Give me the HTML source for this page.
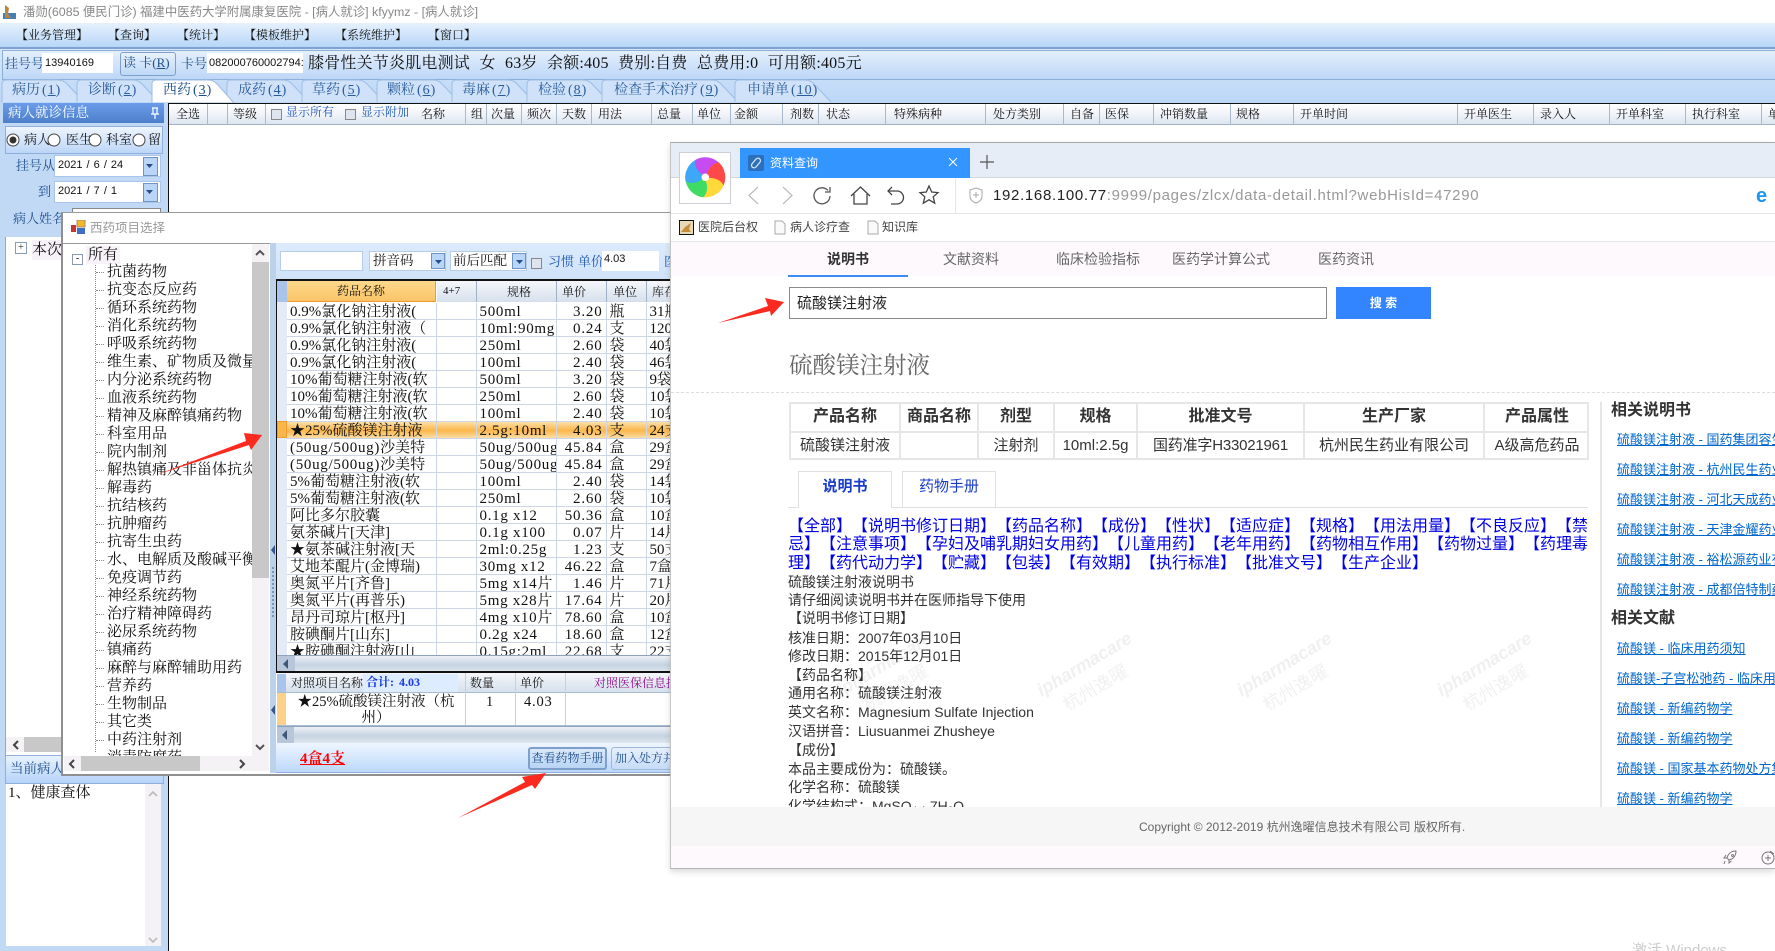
<!DOCTYPE html>
<html lang="zh"><head><meta charset="utf-8"><title>病人就诊</title>
<style>
html,body{margin:0;padding:0;width:1775px;height:951px;overflow:hidden;background:#fff}
body{position:relative;font-family:"Liberation Serif","Noto Serif CJK SC",serif;font-size:12px;color:#111;text-spacing-trim:space-all}
.a{position:absolute;white-space:nowrap}
.b{position:absolute}
.s{font-family:"Liberation Sans","Noto Sans CJK SC",sans-serif}
.hd{position:absolute;top:104px;height:20px;line-height:20px;font-size:12px;white-space:nowrap;color:#111}
.sp{position:absolute;top:104px;height:21px;width:1px;background:#a9b9cc}
.tree div{position:absolute;left:107px;white-space:nowrap;font-size:15px;line-height:18px;height:18px}
.tree div::before{content:"";position:absolute;left:-11px;top:9px;width:8px;border-top:1px dotted #888}
table{border-collapse:collapse;table-layout:fixed}
#g td{height:14px;line-height:14px;padding:2px 0 0 3px;border-right:1px solid #cdd6e4;border-bottom:1px solid #cdd6e4;font-size:15px;white-space:nowrap;overflow:hidden;color:#111}
#g td.r{text-align:right;padding:2px 3px 0 0;letter-spacing:.8px}
#g td.m{letter-spacing:.7px}
#g span{letter-spacing:.7px}
.ts{position:absolute;top:80px;height:22px;line-height:22px;font-size:14px;color:#2a5c9c;white-space:nowrap}
.ts i{font-style:normal;letter-spacing:1px;margin-left:2px}
.th{position:absolute;top:402px;height:29px;line-height:29px;text-align:center;font-size:16px;font-weight:bold;color:#333}
.td{position:absolute;top:431px;height:29px;line-height:29px;text-align:center;font-size:15px;color:#333}
.vl{position:absolute;top:402px;height:58px;width:2px;background:#e6e6e6}
.lk{position:absolute;left:1617px;font-size:13px;line-height:16px;color:#0066cc;text-decoration:underline;white-space:nowrap;font-family:"Liberation Sans","Noto Sans CJK SC",sans-serif}
.tx{position:absolute;left:788px;font-size:14px;line-height:18px;color:#333;white-space:nowrap;font-family:"Liberation Sans","Noto Sans CJK SC",sans-serif}
.sb{position:absolute;background:linear-gradient(#eef1f7,#c6d3e2 55%,#dfe6ef);border-top:1px solid #8fa3bd}
.w1{position:absolute;font-family:"Liberation Sans","Noto Sans CJK SC",sans-serif;white-space:nowrap;font-size:18px;font-style:italic;font-weight:bold;color:#f0f0f0;transform:rotate(-31deg);top:654px}
.w2{position:absolute;font-family:"Liberation Sans","Noto Sans CJK SC",sans-serif;white-space:nowrap;font-size:18px;color:#f1f1f1;transform:rotate(-31deg);top:674px}
</style></head><body>

<!-- title bar -->
<svg class="b" style="left:2px;top:4px" width="16" height="16"><rect x="1" y="9" width="13" height="6" fill="#4a7fb5"/><path d="M3 1l4 3-1 6 3 4H3z" fill="#b9853c"/></svg>
<div class="a s" style="left:23px;top:3px;font-size:12.4px;line-height:18px;color:#888">潘勋(6085 便民门诊) 福建中医药大学附属康复医院 - [病人就诊] kfyymz - [病人就诊]</div>

<!-- menu -->
<div class="b" style="left:0;top:23px;width:1775px;height:24px;background:linear-gradient(#e6f1fd,#b7d6f8)"></div>
<div class="b" style="left:0;top:47px;width:1775px;height:2px;background:#7ea3cf"></div>
<div class="a" style="left:16px;top:27px;line-height:16px;font-size:12px">【业务管理】</div>
<div class="a" style="left:108px;top:27px;line-height:16px;font-size:12px">【查询】</div>
<div class="a" style="left:177px;top:27px;line-height:16px;font-size:12px">【统计】</div>
<div class="a" style="left:244px;top:27px;line-height:16px;font-size:12px">【模板维护】</div>
<div class="a" style="left:335px;top:27px;line-height:16px;font-size:12px">【系统维护】</div>
<div class="a" style="left:428px;top:27px;line-height:16px;font-size:12px">【窗口】</div>

<!-- toolbar -->
<div class="b" style="left:0;top:49px;width:1775px;height:54px;background:linear-gradient(#d5e6fa,#bcd7f7)"></div>
<div class="b" style="left:2px;top:50px;width:1773px;height:28px;border:1px solid #8eb0d8;border-right:0;background:linear-gradient(#e3effc,#bdd7f7)"></div>
<div class="a" style="left:5px;top:55px;line-height:18px;font-size:13px;color:#1d4d8c">挂号号</div>
<div class="b" style="left:42px;top:53px;width:71px;height:20px;background:#fff"></div>
<div class="a s" style="left:45px;top:55px;line-height:16px;font-size:11px;color:#111">13940169</div>
<div class="b" style="left:120px;top:52px;width:54px;height:22px;border:1px solid #7e9fca;border-radius:3px;background:linear-gradient(#e8f2fd,#bdd8f7)"></div>
<div class="a" style="left:123px;top:54px;line-height:18px;font-size:13px;color:#1d4d8c">读 卡(<u>R</u>)</div>
<div class="a" style="left:181px;top:55px;line-height:18px;font-size:13px;color:#1d4d8c">卡号</div>
<div class="b" style="left:207px;top:53px;width:96px;height:20px;background:#fff;overflow:hidden"><div class="a s" style="left:2px;top:2px;line-height:16px;font-size:11px;color:#111">082000760002794:</div></div>
<div class="a" style="left:308px;top:52px;line-height:24px;font-size:16px;color:#111;word-spacing:5.2px;letter-spacing:.2px">膝骨性关节炎肌电测试 女 63岁 余额:405 费别:自费 总费用:0 可用额:405元</div>

<!-- tabs -->
<svg class="b" style="left:0;top:78px" width="840" height="26">
<g fill="#cfe2f9" stroke="#9cbde4">
<path d="M2 24V6Q2 2 6 2H58Q64 2 68 7L84 24"/>
<path d="M77 24V6Q77 2 81 2H133Q139 2 143 7L159 24"/>
<path d="M227 24V6Q227 2 231 2H283Q289 2 293 7L309 24"/>
<path d="M302 24V6Q302 2 306 2H358Q364 2 368 7L384 24"/>
<path d="M377 24V6Q377 2 381 2H433Q439 2 443 7L459 24"/>
<path d="M452 24V6Q452 2 456 2H508Q514 2 518 7L534 24"/>
<path d="M527 24V6Q527 2 531 2H583Q589 2 593 7L609 24"/>
<path d="M602 24V6Q602 2 606 2H712Q718 2 722 7L738 24"/>
<path d="M735 24V6Q735 2 739 2H805Q811 2 815 7L831 24"/>
<path d="M152 25V6Q152 2 156 2H208Q214 2 218 7L234 25Z" fill="#fff"/>
</g></svg>
<div class="ts" style="left:12px">病历<i>(<u>1</u>)</i></div>
<div class="ts" style="left:88px">诊断<i>(<u>2</u>)</i></div>
<div class="ts" style="left:163px;color:#1d4d8c">西药<i>(<u>3</u>)</i></div>
<div class="ts" style="left:238px">成药<i>(<u>4</u>)</i></div>
<div class="ts" style="left:312px">草药<i>(<u>5</u>)</i></div>
<div class="ts" style="left:387px">颗粒<i>(<u>6</u>)</i></div>
<div class="ts" style="left:462px">毒麻<i>(<u>7</u>)</i></div>
<div class="ts" style="left:538px">检验<i>(<u>8</u>)</i></div>
<div class="ts" style="left:614px">检查手术治疗<i>(<u>9</u>)</i></div>
<div class="ts" style="left:747px">申请单<i>(<u>10</u>)</i></div>

<!-- left panel -->
<div class="b" style="left:0;top:103px;width:168px;height:848px;background:#c2d9f6"></div>
<div class="b" style="left:3px;top:103px;width:161px;height:20px;background:linear-gradient(#6a9cea,#4d7fc9)"></div>
<div class="a" style="left:8px;top:104px;line-height:18px;font-size:13.5px;color:#fff">病人就诊信息</div>
<svg class="b" style="left:149px;top:107px" width="12" height="12"><path d="M3 1h6M4 1v6M8 1v6M2 7h8M6 7v5" stroke="#fff" stroke-width="1.2" fill="none"/></svg>
<div class="b" style="left:5px;top:126px;width:156px;height:26px;border:1px solid #8fb0dc;background:linear-gradient(#eef5fe,#bcd6f7)"></div>
<svg class="b" style="left:5px;top:132px" width="160" height="16"><g fill="#fff" stroke="#444"><circle cx="8" cy="8" r="6"/><circle cx="49" cy="8" r="6"/><circle cx="90" cy="8" r="6"/><circle cx="134" cy="8" r="6"/></g><circle cx="8" cy="8" r="3.5" fill="#333"/></svg>
<div class="a" style="left:24px;top:131px;line-height:18px;font-size:13px;width:137px;overflow:hidden">病人<span style="margin-left:16px">医生</span><span style="margin-left:14px">科室</span><span style="margin-left:16px">留</span></div>
<div class="a" style="left:16px;top:157px;line-height:18px;font-size:13px;color:#1d4d8c">挂号从</div>
<div class="a" style="left:38px;top:183px;line-height:18px;font-size:13px;color:#1d4d8c">到</div>
<div class="a" style="left:13px;top:210px;line-height:18px;font-size:13px;color:#1d4d8c">病人姓名</div>
<div class="b" style="left:54px;top:155px;width:105px;height:20px;border:1px solid #a9c5ea;background:#fff"></div>
<div class="b" style="left:54px;top:181px;width:105px;height:20px;border:1px solid #a9c5ea;background:#fff"></div>
<div class="b" style="left:72px;top:208px;width:87px;height:20px;border:1px solid #888;background:#fff"></div>
<div class="a s" style="left:58px;top:158px;line-height:14px;font-size:11px;word-spacing:1px">2021 / 6 / 24</div>
<div class="a s" style="left:58px;top:184px;line-height:14px;font-size:11px;word-spacing:1px">2021 / 7 / 1</div>
<div class="b" style="left:143px;top:157px;width:13px;height:17px;background:#b9d5f7;border:1px solid #6f93c2"></div>
<div class="b" style="left:143px;top:183px;width:13px;height:17px;background:#b9d5f7;border:1px solid #6f93c2"></div>
<svg class="b" style="left:146px;top:163px" width="8" height="6"><path d="M0 1h7L3.5 5z" fill="#244f8a"/></svg>
<svg class="b" style="left:146px;top:189px" width="8" height="6"><path d="M0 1h7L3.5 5z" fill="#244f8a"/></svg>
<div class="b" style="left:5px;top:237px;width:157px;height:518px;background:#fff;border-left:1px solid #8fa9ca"></div>
<div class="b" style="left:15px;top:242px;width:10px;height:10px;border:1px solid #8a9bb5;background:#fff;font-size:10px;line-height:10px;text-align:center;color:#233">+</div>
<div class="a" style="left:32px;top:240px;line-height:20px;font-size:15px;background:#f7f2f7">本次</div>
<div class="b" style="left:6px;top:737px;width:156px;height:15px;background:#f5f2f5"></div>
<div class="b" style="left:24px;top:737px;width:40px;height:15px;background:#c8c8c8"></div>
<svg class="b" style="left:11px;top:739px" width="10" height="12"><path d="M7 2L3 6l4 4" stroke="#444" stroke-width="2" fill="none"/></svg>
<div class="b" style="left:5px;top:755px;width:157px;height:27px;border:1px solid #8fb0dc;background:linear-gradient(#e8f2fe,#b5d3f8)"></div>
<div class="a" style="left:10px;top:760px;line-height:18px;font-size:13.5px;color:#1d4d8c">当前病人诊断</div>
<div class="b" style="left:6px;top:784px;width:155px;height:162px;background:#fff"></div>
<div class="b" style="left:145px;top:784px;width:16px;height:162px;background:#f5f2f5"></div>
<svg class="b" style="left:148px;top:789px" width="10" height="156"><path d="M1 7l4-4 4 4M1 149l4 4 4-4" stroke="#bbb" stroke-width="1.6" fill="none"/></svg>
<div class="a" style="left:8px;top:784px;line-height:18px;font-size:15px">1、健康查体</div>

<!-- main grid header -->
<div class="b" style="left:168px;top:103px;width:1607px;height:21px;border-top:1px solid #111;background:linear-gradient(#fff,#eef2f8 55%,#dbe3ee)"></div>
<div class="b" style="left:168px;top:103px;width:1px;height:848px;background:#111"></div>
<div class="b" style="left:169px;top:124px;width:1606px;height:1px;background:#9fb1c7"></div>
<div class="hd" style="left:176px">全选</div><div class="sp" style="left:207px"></div><div class="sp" style="left:227px"></div>
<div class="hd" style="left:233px">等级</div><div class="sp" style="left:265px"></div>
<div class="b" style="left:271px;top:109px;width:9px;height:9px;border:1px solid #888;background:#dfe5ee"></div>
<div class="hd" style="left:286px;top:102px;color:#1d57b8">显示所有</div>
<div class="b" style="left:345px;top:109px;width:9px;height:9px;border:1px solid #888;background:#dfe5ee"></div>
<div class="hd" style="left:361px;top:102px;color:#1d57b8">显示附加</div>
<div class="hd" style="left:421px">名称</div><div class="sp" style="left:465px"></div>
<div class="hd" style="left:471px">组</div><div class="sp" style="left:486px"></div>
<div class="hd" style="left:491px">次量</div><div class="sp" style="left:521px"></div>
<div class="hd" style="left:527px">频次</div><div class="sp" style="left:556px"></div>
<div class="hd" style="left:562px">天数</div><div class="sp" style="left:591px"></div>
<div class="hd" style="left:598px">用法</div><div class="sp" style="left:651px"></div>
<div class="hd" style="left:657px">总量</div><div class="sp" style="left:692px"></div>
<div class="hd" style="left:697px">单位</div><div class="sp" style="left:730px"></div>
<div class="hd" style="left:734px">金额</div><div class="sp" style="left:782px"></div>
<div class="hd" style="left:790px">剂数</div><div class="sp" style="left:818px"></div>
<div class="hd" style="left:826px">状态</div><div class="sp" style="left:885px"></div>
<div class="hd" style="left:894px">特殊病种</div><div class="sp" style="left:985px"></div>
<div class="hd" style="left:993px">处方类别</div><div class="sp" style="left:1063px"></div>
<div class="hd" style="left:1070px">自备</div><div class="sp" style="left:1099px"></div>
<div class="hd" style="left:1105px">医保</div><div class="sp" style="left:1153px"></div>
<div class="hd" style="left:1160px">冲销数量</div><div class="sp" style="left:1230px"></div>
<div class="hd" style="left:1236px">规格</div><div class="sp" style="left:1293px"></div>
<div class="hd" style="left:1300px">开单时间</div><div class="sp" style="left:1457px"></div>
<div class="hd" style="left:1464px">开单医生</div><div class="sp" style="left:1533px"></div>
<div class="hd" style="left:1540px">录入人</div><div class="sp" style="left:1609px"></div>
<div class="hd" style="left:1616px">开单科室</div><div class="sp" style="left:1685px"></div>
<div class="hd" style="left:1692px">执行科室</div><div class="sp" style="left:1761px"></div>
<div class="hd" style="left:1768px">单</div>

<!-- dialog -->
<div class="b" style="left:61px;top:212px;width:640px;height:561px;background:#fff;border-top:1px solid #9a9a9a;border-left:2px solid #8f8f8f;border-bottom:2px solid #8f8f8f"></div>
<svg class="b" style="left:71px;top:220px" width="16" height="15"><rect x="0" y="5" width="5" height="7" fill="#c33"/><rect x="6" y="0" width="8" height="7" fill="#f2b92a" stroke="#a87"/><rect x="6" y="8" width="8" height="6" fill="#3f6fc4"/></svg>
<div class="a s" style="left:90px;top:219px;line-height:18px;font-size:12.5px;color:#9a9a9a">西药项目选择</div>
<div class="b" style="left:63px;top:243px;width:213px;height:529px;background:#fff;border-top:1px solid #9a9a9a"></div>

<div class="b" style="left:252px;top:244px;width:17px;height:527px;background:#f5f2f5"></div>
<div class="b" style="left:252px;top:262px;width:17px;height:316px;background:#c8c8c8"></div>
<svg class="b" style="left:254px;top:248px" width="12" height="10"><path d="M2 7l4-4 4 4" stroke="#555" stroke-width="2" fill="none"/></svg>
<svg class="b" style="left:254px;top:742px" width="12" height="10"><path d="M2 3l4 4 4-4" stroke="#555" stroke-width="2" fill="none"/></svg>
<div class="b" style="left:64px;top:756px;width:188px;height:15px;background:#f5f2f5"></div>
<div class="b" style="left:81px;top:756px;width:119px;height:15px;background:#c8c8c8"></div>
<svg class="b" style="left:68px;top:758px" width="190" height="12"><path d="M6 2L2 6l4 4M172 2l4 4-4 4" stroke="#444" stroke-width="2" fill="none"/></svg>
<div class="b" style="left:95px;top:262px;width:0;height:490px;border-left:1px dotted #888"></div>
<div class="b" style="left:72px;top:254px;width:9px;height:9px;border:1px solid #8a9bb5;font-size:10px;line-height:8px;text-align:center">-</div>
<div class="a" style="left:86px;top:246px;line-height:18px;font-size:15px;background:#f7f2f7;padding:0 2px">所有</div>

<div class="b tree" style="left:0;top:1px;width:252px;height:755px;overflow:hidden">
<div style="top:262px">抗菌药物</div><div style="top:280px">抗变态反应药</div><div style="top:298px">循环系统药物</div><div style="top:316px">消化系统药物</div><div style="top:334px">呼吸系统药物</div><div style="top:352px">维生素、矿物质及微量元素</div><div style="top:370px">内分泌系统药物</div><div style="top:388px">血液系统药物</div><div style="top:406px">精神及麻醉镇痛药物</div><div style="top:424px">科室用品</div><div style="top:442px">院内制剂</div><div style="top:460px">解热镇痛及非甾体抗炎药</div><div style="top:478px">解毒药</div><div style="top:496px">抗结核药</div><div style="top:514px">抗肿瘤药</div><div style="top:532px">抗寄生虫药</div><div style="top:550px">水、电解质及酸碱平衡药</div><div style="top:568px">免疫调节药</div><div style="top:586px">神经系统药物</div><div style="top:604px">治疗精神障碍药</div><div style="top:622px">泌尿系统药物</div><div style="top:640px">镇痛药</div><div style="top:658px">麻醉与麻醉辅助用药</div><div style="top:676px">营养药</div><div style="top:694px">生物制品</div><div style="top:712px">其它类</div><div style="top:730px">中药注射剂</div><div style="top:748px">消毒防腐药</div>
</div>

<!-- splitter -->
<div class="b" style="left:270px;top:243px;width:6px;height:530px;background:#bcd1ea"></div>
<svg class="b" style="left:270px;top:545px" width="6" height="175"><path d="M5 0L1 5l4 5zM5 160l-4 5 4 5z" fill="#36558a"/><path d="M3 22v52" stroke="#36558a" stroke-dasharray="2 2"/></svg>

<!-- dialog right -->
<div class="b" style="left:276px;top:243px;width:425px;height:37px;background:linear-gradient(#dcebfc,#cfe2f9)"></div>
<div class="b" style="left:280px;top:251px;width:83px;height:20px;background:#fff;border:1px solid #b7cce6;box-sizing:border-box"></div>
<div class="b" style="left:369px;top:251px;width:77px;height:20px;background:#fff;border:1px solid #b7cce6;box-sizing:border-box"></div>
<div class="a" style="left:373px;top:251px;line-height:19px;font-size:13.5px">拼音码</div>
<div class="b" style="left:431px;top:253px;width:14px;height:16px;background:#b9d5f7;border:1px solid #6f93c2;box-sizing:border-box"></div>
<svg class="b" style="left:435px;top:259px" width="8" height="6"><path d="M0 1h7L3.5 5z" fill="#244f8a"/></svg>
<div class="b" style="left:450px;top:251px;width:77px;height:20px;background:#fff;border:1px solid #b7cce6;box-sizing:border-box"></div>
<div class="a" style="left:453px;top:251px;line-height:19px;font-size:13.5px">前后匹配</div>
<div class="b" style="left:512px;top:253px;width:14px;height:16px;background:#b9d5f7;border:1px solid #6f93c2;box-sizing:border-box"></div>
<svg class="b" style="left:516px;top:259px" width="8" height="6"><path d="M0 1h7L3.5 5z" fill="#244f8a"/></svg>
<div class="b" style="left:531px;top:258px;width:9px;height:9px;border:1px solid #888;background:#dfe5ee"></div>
<div class="a" style="left:548px;top:253px;line-height:18px;font-size:13px;color:#1d57b8">习惯</div>
<div class="a" style="left:578px;top:253px;line-height:18px;font-size:13px;color:#1d57b8">单价</div>
<div class="b" style="left:602px;top:251px;width:57px;height:20px;background:#fff"></div>
<div class="a s" style="left:604px;top:252px;line-height:14px;font-size:11px">4.03</div>
<div class="a" style="left:664px;top:253px;line-height:18px;font-size:13px;color:#1d57b8">医</div>

<!-- drug grid -->
<div class="b" style="left:276px;top:279px;width:425px;height:2px;background:#111"></div>
<div class="b" style="left:277px;top:281px;width:10px;height:21px;background:#a9c4ea"></div>
<div class="b" style="left:287px;top:281px;width:149px;height:21px;background:linear-gradient(#ffd98c,#f9c468);border-bottom:1px solid #f09a30;border-right:1px solid #f09a30;box-sizing:border-box;text-align:center;line-height:20px;font-size:12px">药品名称</div>
<div class="b" style="left:437px;top:281px;width:264px;height:21px;background:linear-gradient(#f5f7fb,#d6e0ec)"></div>
<div class="a" style="left:443px;top:282px;line-height:18px;font-size:11px">4+7</div>
<div class="a" style="left:507px;top:282px;line-height:20px;font-size:12px">规格</div>
<div class="a" style="left:562px;top:282px;line-height:20px;font-size:12px">单价</div>
<div class="a" style="left:613px;top:282px;line-height:20px;font-size:12px">单位</div>
<div class="a" style="left:652px;top:282px;line-height:20px;font-size:12px">库存</div>
<div class="b" style="left:476px;top:281px;width:1px;height:21px;background:#9fb1c7"></div>
<div class="b" style="left:556px;top:281px;width:1px;height:21px;background:#9fb1c7"></div>
<div class="b" style="left:606px;top:281px;width:1px;height:21px;background:#9fb1c7"></div>
<div class="b" style="left:646px;top:281px;width:1px;height:21px;background:#9fb1c7"></div>
<div class="b" style="left:276px;top:281px;width:1px;height:392px;background:#111"></div>
<div class="b" style="left:277px;top:302px;width:10px;height:353px;background:#e4ebf5"></div>
<div class="b" style="left:287px;top:303px;width:414px;height:352px;overflow:hidden;background:#fff">
<table id="g" style="width:413px"><colgroup><col style="width:149px"><col style="width:40px"><col style="width:80px"><col style="width:50px"><col style="width:40px"><col style="width:54px"></colgroup>
<tr><td>0.9%氯化钠注射液(</td><td></td><td class="m">500ml</td><td class="r">3.20</td><td>瓶</td><td>31瓶</td></tr>
<tr><td>0.9%氯化钠注射液（</td><td></td><td class="m">10ml:90mg</td><td class="r">0.24</td><td>支</td><td>120</td></tr>
<tr><td>0.9%氯化钠注射液(</td><td></td><td class="m">250ml</td><td class="r">2.60</td><td>袋</td><td>40袋</td></tr>
<tr><td>0.9%氯化钠注射液(</td><td></td><td class="m">100ml</td><td class="r">2.40</td><td>袋</td><td>46袋</td></tr>
<tr><td>10%葡萄糖注射液(软</td><td></td><td class="m">500ml</td><td class="r">3.20</td><td>袋</td><td>9袋</td></tr>
<tr><td>10%葡萄糖注射液(软</td><td></td><td class="m">250ml</td><td class="r">2.60</td><td>袋</td><td>10袋</td></tr>
<tr><td>10%葡萄糖注射液(软</td><td></td><td class="m">100ml</td><td class="r">2.40</td><td>袋</td><td>10袋</td></tr>
<tr style="background:linear-gradient(#fde0a8,#fbb64a 50%,#fde3b2)"><td>★25%硫酸镁注射液</td><td></td><td class="m">2.5g:10ml</td><td class="r">4.03</td><td>支</td><td>24支</td></tr>
<tr><td><span>(50ug/500ug)</span>沙美特</td><td></td><td class="m">50ug/500ug</td><td class="r">45.84</td><td>盒</td><td>29盒</td></tr>
<tr><td><span>(50ug/500ug)</span>沙美特</td><td></td><td class="m">50ug/500ug</td><td class="r">45.84</td><td>盒</td><td>29盒</td></tr>
<tr><td>5%葡萄糖注射液(软</td><td></td><td class="m">100ml</td><td class="r">2.40</td><td>袋</td><td>14袋</td></tr>
<tr><td>5%葡萄糖注射液(软</td><td></td><td class="m">250ml</td><td class="r">2.60</td><td>袋</td><td>10袋</td></tr>
<tr><td>阿比多尔胶囊</td><td></td><td class="m">0.1g x12</td><td class="r">50.36</td><td>盒</td><td>10盒</td></tr>
<tr><td>氨茶碱片[天津]</td><td></td><td class="m">0.1g x100</td><td class="r">0.07</td><td>片</td><td>14片</td></tr>
<tr><td>★氨茶碱注射液[天</td><td></td><td class="m">2ml:0.25g</td><td class="r">1.23</td><td>支</td><td>50支</td></tr>
<tr><td>艾地苯醌片(金博瑞)</td><td></td><td class="m">30mg x12</td><td class="r">46.22</td><td>盒</td><td>7盒</td></tr>
<tr><td>奥氮平片[齐鲁]</td><td></td><td class="m">5mg x14片</td><td class="r">1.46</td><td>片</td><td>71片</td></tr>
<tr><td>奥氮平片(再普乐)</td><td></td><td class="m">5mg x28片</td><td class="r">17.64</td><td>片</td><td>20片</td></tr>
<tr><td>昂丹司琼片[枢丹]</td><td></td><td class="m">4mg x10片</td><td class="r">78.60</td><td>盒</td><td>10盒</td></tr>
<tr><td>胺碘酮片[山东]</td><td></td><td class="m">0.2g x24</td><td class="r">18.60</td><td>盒</td><td>12盒</td></tr>
<tr><td>★胺碘酮注射液[山</td><td></td><td class="m">0.15g:2ml</td><td class="r">22.68</td><td>支</td><td>22支</td></tr>
</table></div>
<div class="b" style="left:277px;top:421px;width:10px;height:17px;background:#fbb64a;border:1px solid #f09a30;box-sizing:border-box"></div>
<div class="sb" style="left:277px;top:655px;width:424px;height:16px"></div>
<div class="b" style="left:277px;top:656px;width:18px;height:16px;background:#b7c6d9"></div>
<svg class="b" style="left:282px;top:659px" width="8" height="10"><path d="M6 0v10L1 5z" fill="#3d5878"/></svg>
<div class="b" style="left:276px;top:671px;width:425px;height:2px;background:#111"></div>

<!-- second grid -->
<div class="b" style="left:277px;top:673px;width:424px;height:19px;background:linear-gradient(#f5f7fb,#d6e0ec);border-bottom:1px solid #a9bcd4"></div>
<div class="b" style="left:277px;top:674px;width:9px;height:18px;background:#a9c4ea"></div>
<div class="b" style="left:363px;top:674px;width:95px;height:18px;background:#deecff"></div>
<div class="a" style="left:291px;top:673px;line-height:20px;font-size:12px">对照项目名称</div>
<div class="a" style="left:366px;top:673px;line-height:19px;font-size:12px;font-weight:bold;color:#1538e8;word-spacing:2px">合计: 4.03</div>
<div class="a" style="left:470px;top:673px;line-height:20px;font-size:12px">数量</div>
<div class="a" style="left:520px;top:673px;line-height:20px;font-size:12px">单价</div>
<div class="a" style="left:594px;top:673px;line-height:20px;font-size:12px;color:#8a0a8a">对照医保信息提示</div>
<div class="b" style="left:465px;top:673px;width:1px;height:53px;background:#c5d0e0"></div>
<div class="b" style="left:515px;top:673px;width:1px;height:53px;background:#c5d0e0"></div>
<div class="b" style="left:565px;top:673px;width:1px;height:53px;background:#c5d0e0"></div>
<div class="b" style="left:277px;top:693px;width:9px;height:32px;background:#fcd18a"></div>
<div class="b" style="left:287px;top:694px;width:178px;line-height:16px;font-size:14.5px;text-align:center;height:31px">★25%硫酸镁注射液（杭州）</div>
<div class="a" style="left:486px;top:694px;line-height:16px;font-size:14.5px">1</div>
<div class="a" style="left:524px;top:694px;line-height:16px;font-size:14.5px;letter-spacing:.8px">4.03</div>
<div class="b" style="left:277px;top:725px;width:424px;height:1px;background:#a9bcd4"></div>
<div class="sb" style="left:277px;top:726px;width:424px;height:16px"></div>
<div class="b" style="left:277px;top:727px;width:17px;height:16px;background:#b7c6d9"></div>
<svg class="b" style="left:281px;top:730px" width="8" height="10"><path d="M6 0v10L1 5z" fill="#3d5878"/></svg>

<!-- bottom action -->
<div class="b" style="left:276px;top:743px;width:425px;height:30px;background:linear-gradient(#eef6ff,#bcd8fb);border-bottom:1px solid #8fb0dc;box-sizing:border-box"></div>
<div class="a" style="left:300px;top:751px;line-height:17px;font-size:15px;font-weight:bold;color:#f00;text-decoration:underline">4盒4支</div>
<div class="b" style="left:528px;top:747px;width:79px;height:23px;border:2px solid #7e9fca;border-radius:3px;box-sizing:border-box;background:linear-gradient(#dbe9fa,#b9d4f5);text-align:center;line-height:18px;font-size:12px;color:#1d4d8c">查看药物手册</div>
<div class="b" style="left:611px;top:747px;width:85px;height:23px;border:1px solid #9db8dc;border-radius:3px;box-sizing:border-box;background:linear-gradient(#e6f0fc,#c6dcf8);padding-left:3px;line-height:20px;font-size:12px;color:#1d4d8c;white-space:nowrap">加入处方并</div>

<!-- red arrows on left -->
<svg class="b" style="left:0;top:0" width="670" height="951"><g fill="#fb2a1f"><polygon points="156,475 246,441 244,433 262,435 251,450 249,445"/><polygon points="458,818 525,782 522,777 546,773 535,789 532,785"/></g></svg>

<!-- browser window -->
<div class="b" style="left:670px;top:142px;width:1105px;height:727px;background:#fff;border-top:1px solid #a8a8a8;border-left:1px solid #c4c4c4;border-bottom:1px solid #b5b5b5;box-sizing:border-box;box-shadow:0 3px 6px rgba(0,0,0,.14);overflow:hidden">
</div>
<div class="b" style="left:671px;top:143px;width:1104px;height:35px;background:#e6edf6;border-bottom:1px solid #d4d8de;box-sizing:border-box"></div>
<div class="b" style="left:740px;top:148px;width:230px;height:30px;background:#3395ff"></div>
<div class="b" style="left:748px;top:155px;width:16px;height:16px;background:#2d6fb8;border-radius:2px"></div>
<svg class="b" style="left:748px;top:155px" width="16" height="16"><rect x="5.5" y="2.500" width="5" height="11" rx="2.500" transform="rotate(40 8 8)" fill="none" stroke="#cfe3fb" stroke-width="1.300"/></svg>
<div class="a s" style="left:770px;top:155px;line-height:17px;font-size:12px;color:#fff">资料查询</div>
<svg class="b" style="left:948px;top:157px" width="10" height="10"><path d="M1 1l8 8M9 1l-8 8" stroke="#fff" stroke-width="1"/></svg>
<svg class="b" style="left:980px;top:155px" width="14" height="14"><path d="M7 0v14M0 7h14" stroke="#555" stroke-width="1.200"/></svg>
<div class="b" style="left:679px;top:152px;width:52px;height:52px;background:#fff;border:1px solid #ccd0d6;box-sizing:border-box"></div>
<svg class="b" style="left:684px;top:156px" width="42" height="42" viewBox="-21.300 -21.300 42 42">
<path transform="rotate(258)" d="M0-20A20 20 0 0 1 19.700 3.500C12-3 6-5 1 0-3-6-5-14 0-20Z" fill="#3da8f7"/>
<path transform="rotate(-30)" d="M0-20A20 20 0 0 1 19.700 3.500C12-3 6-5 1 0-3-6-5-14 0-20Z" fill="#c64cf2"/>
<path transform="rotate(42)" d="M0-20A20 20 0 0 1 19.700 3.500C12-3 6-5 1 0-3-6-5-14 0-20Z" fill="#ff4848"/>
<path transform="rotate(114)" d="M0-20A20 20 0 0 1 19.700 3.500C12-3 6-5 1 0-3-6-5-14 0-20Z" fill="#ffd83a"/>
<path transform="rotate(186)" d="M0-20A20 20 0 0 1 19.700 3.500C12-3 6-5 1 0-3-6-5-14 0-20Z" fill="#3fdc63"/>
<path transform="rotate(258)" d="M0-20A20 20 0 0 1 10-17.300C6-14 3-10 1 0-3-6-5-14 0-20Z" fill="#3da8f7"/>
<circle r="3.800" fill="#fff"/></svg>
<svg class="b" style="left:740px;top:182px" width="220" height="30" fill="none">
<path d="M18 5L9 13.500 18 22M43 5l9 8.500L43 22" stroke="#b5b5b5" stroke-width="1.200"/>
<path d="M88 8.500A8 8 0 1 0 90 14M90 5v5h-5" stroke="#555" stroke-width="1.300"/>
<path d="M111 14l9.500-9 9.500 9M114 12v10h13V12" stroke="#444" stroke-width="1.300"/>
<path d="M148 9h9a6.500 6.500 0 0 1 0 13h-6M152 5l-4 4 4 4" stroke="#444" stroke-width="1.300"/>
<path d="M189 4l2.700 6 6.300.600-4.800 4.200 1.500 6.400-5.700-3.400-5.700 3.400 1.500-6.400-4.800-4.200 6.300-.600z" stroke="#444" stroke-width="1.300"/>
</svg>
<div class="b" style="left:955px;top:178px;width:1px;height:35px;background:#e4e6ea"></div>
<svg class="b" style="left:969px;top:187px" width="14" height="17" fill="none"><path d="M7 1l6 2v6c0 4-3 6-6 7-3-1-6-3-6-7V3z" stroke="#aaa"/><path d="M7 5v6M4 8h6" stroke="#aaa"/></svg>
<div class="a s" style="left:993px;top:186px;line-height:20px;font-size:15px;letter-spacing:.68px;color:#999"><span style="color:#222">192.168.100.77</span>:9999/pages/zlcx/data-detail.html?webHisId=47290</div>
<svg class="b" style="left:1754px;top:187px" width="18" height="18"><text x="2" y="15" font-family="Liberation Sans" font-size="20" font-weight="bold" fill="#1e96ee">e</text></svg>
<div class="b" style="left:671px;top:213px;width:1104px;height:29px;background:#fff;border-top:1px solid #e6e6e6;border-bottom:1px solid #e6e6e6;box-sizing:border-box"></div>
<div class="b" style="left:679px;top:220px;width:15px;height:15px;border:1px solid #111;box-sizing:border-box;background:#e8d9b8"></div>
<svg class="b" style="left:680px;top:221px" width="13" height="13"><path d="M1 11l4-5 6-4-2 6 2 3H6z" fill="#c48f38"/></svg>
<div class="a s" style="left:698px;top:219px;line-height:17px;font-size:12px;color:#444">医院后台权</div>
<svg class="b" style="left:774px;top:220px" width="12" height="15" fill="none"><path d="M1 1h7l3 3v10H1z" fill="#fafafa" stroke="#aaa"/></svg>
<div class="a s" style="left:790px;top:219px;line-height:17px;font-size:12px;color:#444">病人诊疗查</div>
<svg class="b" style="left:867px;top:220px" width="12" height="15" fill="none"><path d="M1 1h7l3 3v10H1z" fill="#fafafa" stroke="#aaa"/></svg>
<div class="a s" style="left:882px;top:219px;line-height:17px;font-size:12px;color:#444">知识库</div>

<div class="b" style="left:671px;top:242px;width:1104px;height:34px;background:#fdf9fd"></div>
<div class="b" style="left:788px;top:275px;width:120px;height:2px;background:#3d8bf5"></div>
<div class="a s" style="left:827px;top:249px;line-height:20px;font-size:14px;font-weight:bold;color:#333">说明书</div>
<div class="a s" style="left:943px;top:249px;line-height:20px;font-size:14px;color:#666">文献资料</div>
<div class="a s" style="left:1056px;top:249px;line-height:20px;font-size:14px;color:#666">临床检验指标</div>
<div class="a s" style="left:1172px;top:249px;line-height:20px;font-size:14px;color:#666">医药学计算公式</div>
<div class="a s" style="left:1318px;top:249px;line-height:20px;font-size:14px;color:#666">医药资讯</div>

<div class="b" style="left:789px;top:287px;width:538px;height:32px;border:1px solid #8a8a8a;box-sizing:border-box;background:#fff"></div>
<div class="a s" style="left:797px;top:294px;line-height:20px;font-size:15px;color:#222">硫酸镁注射液</div>
<div class="b s" style="left:1336px;top:287px;width:95px;height:32px;background:#3385ff;color:#fff;text-align:center;line-height:32px;font-size:12px;font-weight:bold">搜 索</div>
<svg class="b" style="left:700px;top:290px" width="90" height="40"><polygon points="18,33 68,16 65,8 84,12 71,26 70,21" fill="#fb2a1f"/></svg>

<div class="a" style="left:789px;top:350px;line-height:32px;font-size:23.500px;color:#666">硫酸镁注射液</div>
<div class="b" style="left:671px;top:392px;width:1104px;height:0;border-top:1px dashed #ddd"></div>

<div class="b" style="left:789px;top:402px;width:800px;height:58px;border:2px solid #e6e6e6;box-sizing:border-box"></div>
<div class="b" style="left:789px;top:431px;width:800px;height:2px;background:#e6e6e6"></div>
<div class="vl" style="left:899px"></div><div class="vl" style="left:977px"></div><div class="vl" style="left:1053px"></div><div class="vl" style="left:1136px"></div><div class="vl" style="left:1303px"></div><div class="vl" style="left:1483px"></div>
<div class="th s" style="left:791px;width:108px">产品名称</div><div class="th s" style="left:901px;width:76px">商品名称</div><div class="th s" style="left:979px;width:74px">剂型</div><div class="th s" style="left:1055px;width:81px">规格</div><div class="th s" style="left:1138px;width:165px">批准文号</div><div class="th s" style="left:1305px;width:178px">生产厂家</div><div class="th s" style="left:1485px;width:104px">产品属性</div>
<div class="td s" style="left:791px;width:108px">硫酸镁注射液</div><div class="td s" style="left:979px;width:74px">注射剂</div><div class="td s" style="left:1055px;width:81px">10ml:2.5g</div><div class="td s" style="left:1138px;width:165px;letter-spacing:-.2px">国药准字H33021961</div><div class="td s" style="left:1305px;width:178px">杭州民生药业有限公司</div><div class="td s" style="left:1485px;width:104px">A级高危药品</div>

<div class="b" style="left:788px;top:507px;width:800px;height:1px;background:#e0e0e0"></div>
<div class="b s" style="left:798px;top:471px;width:94px;height:37px;background:#fff;border:1px solid #e0e0e0;border-bottom:0;box-sizing:border-box;text-align:center;line-height:30px;font-size:15px;font-weight:bold;color:#1a3ccc">说明书</div>
<div class="b s" style="left:902px;top:471px;width:94px;height:36px;border:1px solid #e0e0e0;border-bottom:0;box-sizing:border-box;text-align:center;line-height:30px;font-size:15px;color:#1a3ccc">药物手册</div>
<div class="b s" style="left:788px;top:518px;width:802px;font-size:16px;line-height:18.400px;color:#0000e6;word-break:break-all">【全部】【说明书修订日期】【药品名称】【成份】【性状】【适应症】【规格】【用法用量】【不良反应】【禁忌】【注意事项】【孕妇及哺乳期妇女用药】【儿童用药】【老年用药】【药物相互作用】【药物过量】【药理毒理】【药代动力学】【贮藏】【包装】【有效期】【执行标准】【批准文号】【生产企业】</div>

<div class="w1" style="left:831px">ipharmacare</div><div class="w2" style="left:859px">杭州逸曜</div>
<div class="w1" style="left:1031px">ipharmacare</div><div class="w2" style="left:1059px">杭州逸曜</div>
<div class="w1" style="left:1231px">ipharmacare</div><div class="w2" style="left:1259px">杭州逸曜</div>
<div class="w1" style="left:1431px">ipharmacare</div><div class="w2" style="left:1459px">杭州逸曜</div>

<div class="b" style="left:671px;top:570px;width:929px;height:237px;overflow:hidden">
<div class="tx" style="left:117px;top:3px">硫酸镁注射液说明书</div>
<div class="tx" style="left:117px;top:21px">请仔细阅读说明书并在医师指导下使用</div>
<div class="tx" style="left:117px;top:39px">【说明书修订日期】</div>
<div class="tx" style="left:117px;top:59px">核准日期：2007年03月10日</div>
<div class="tx" style="left:117px;top:77px">修改日期：2015年12月01日</div>
<div class="tx" style="left:117px;top:96px">【药品名称】</div>
<div class="tx" style="left:117px;top:114px">通用名称：硫酸镁注射液</div>
<div class="tx" style="left:117px;top:133px">英文名称：Magnesium Sulfate Injection</div>
<div class="tx" style="left:117px;top:152px">汉语拼音：Liusuanmei Zhusheye</div>
<div class="tx" style="left:117px;top:171px">【成份】</div>
<div class="tx" style="left:117px;top:190px">本品主要成份为：硫酸镁。</div>
<div class="tx" style="left:117px;top:208px">化学名称：硫酸镁</div>
<div class="tx" style="left:117px;top:227px">化学结构式：MgSO₄ · 7H₂O</div>
</div>

<div class="b" style="left:1600px;top:402px;width:2px;height:405px;background:#e6e6e6"></div>
<div class="a s" style="left:1611px;top:401px;line-height:20px;font-size:16px;font-weight:bold;color:#333">相关说明书</div>
<div class="lk" style="top:432px">硫酸镁注射液 - 国药集团容生制药有限公司</div>
<div class="lk" style="top:462px">硫酸镁注射液 - 杭州民生药业有限公司</div>
<div class="lk" style="top:492px">硫酸镁注射液 - 河北天成药业股份有限公司</div>
<div class="lk" style="top:522px">硫酸镁注射液 - 天津金耀药业有限公司</div>
<div class="lk" style="top:552px">硫酸镁注射液 - 裕松源药业有限公司</div>
<div class="lk" style="top:582px">硫酸镁注射液 - 成都倍特制药有限公司</div>
<div class="a s" style="left:1611px;top:609px;line-height:20px;font-size:16px;font-weight:bold;color:#333">相关文献</div>
<div class="lk" style="top:641px">硫酸镁 - 临床用药须知</div>
<div class="lk" style="top:671px">硫酸镁-子宫松弛药 - 临床用药须知</div>
<div class="lk" style="top:701px">硫酸镁 - 新编药物学</div>
<div class="lk" style="top:731px">硫酸镁 - 新编药物学</div>
<div class="lk" style="top:761px">硫酸镁 - 国家基本药物处方集</div>
<div class="lk" style="top:791px">硫酸镁 - 新编药物学</div>

<div class="b" style="left:671px;top:807px;width:1104px;height:39px;background:#f6f6f6"></div>
<div class="a s" style="left:1139px;top:819px;line-height:16px;font-size:12px;color:#666">Copyright © 2012-2019 杭州逸曜信息技术有限公司 版权所有.</div>
<div class="b" style="left:671px;top:846px;width:1104px;height:22px;background:#fdf9fd"></div>
<svg class="b" style="left:1722px;top:850px" width="53" height="16" fill="none" stroke="#777"><path d="M14 1C9 1 6 4 5 8l2 2c4-1 7-4 7-9zM5 8H2l2-3M7 10v3l2.500-2M3 11l-1 3M10.500 4.500a1 1 0 1 0 .1 0"/><circle cx="46" cy="8" r="6"/><path d="M46 5v6M43 8h6M48 1l4 3"/></svg>
<div class="a s" style="left:1632px;top:942px;line-height:18px;font-size:15px;color:#ccc">激活 Windows</div>
</body></html>
